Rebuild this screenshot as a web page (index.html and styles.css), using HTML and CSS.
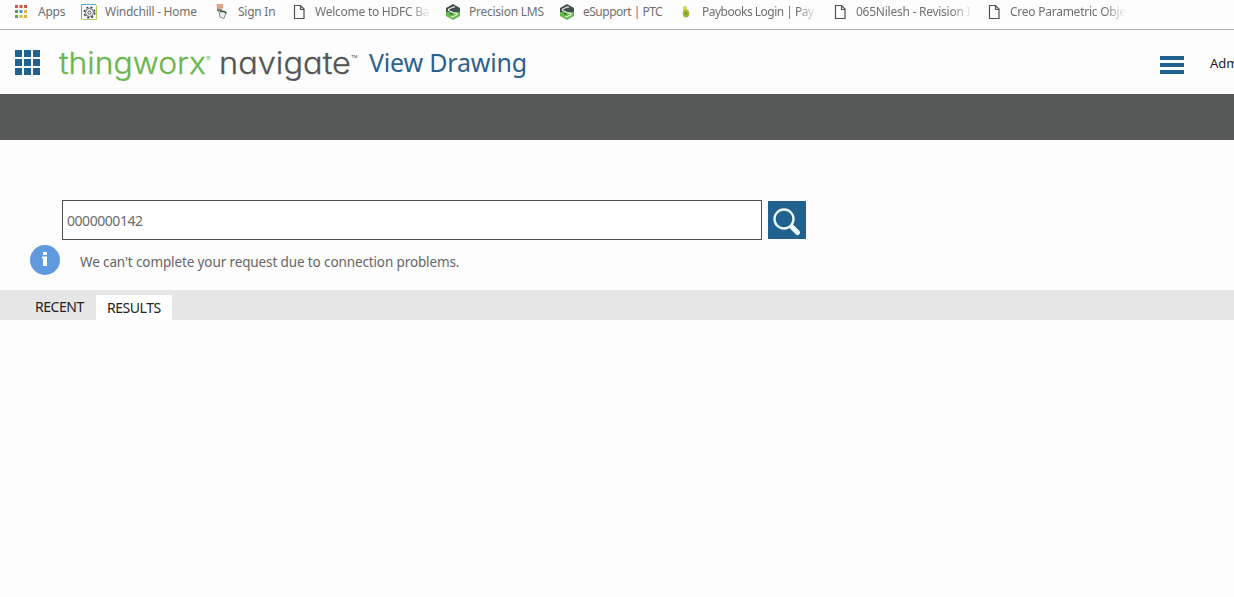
FILE: index.html
```html
<!DOCTYPE html>
<html lang="en">
<head>
    <meta charset="UTF-8">
    <meta name="viewport" content="width=device-width, initial-scale=1.0">
    <title>View Drawing</title>
    <link rel="stylesheet" href="styles.css">
</head>
<body>
    <svg class="symbols" width="0" height="0">
        <symbol id="page" viewBox="0 0 16 16">
            <path d="M3.500 1.500h6l3.500 3.500v9.500h-9.500zM9.500 1.500v4h3.500" fill="#fff" stroke="#505050" stroke-width="1.200"/>
        </symbol>
        <symbol id="ptc" viewBox="0 0 16 16">
            <path d="M1 4l7-4 7 4v4H1z" fill="#45504e"/>
            <path d="M1 8h14v4l-7 4-7-4z" fill="#62bd47"/>
            <path d="M10 3.300L8.500 2.800 3.500 5.300v1.200L8 8.500l4 1.200v1L7.500 13 6 12.500" fill="none" stroke="#f4f8f3" stroke-width="1.100"/>
            <path d="M8 5.500l4 2-4 .8zM4.500 8.500L8 9.500l-2 1.500z" fill="#45504e"/>
        </symbol>
    </svg>
    <nav class="bookmarks">
        <a class="bookmark">
            <svg class="icon" viewBox="0 0 16 16">
                <path d="M2 1h3v3H2zM6.500 1h3v3h-3zM11 1h3v3h-3z" fill="#d0574b"/>
                <path d="M2 6h3v3H2z" fill="#4e9c60"/>
                <path d="M6.500 6h3v3h-3z" fill="#4c8fd8"/>
                <path d="M11 6h3v3h-3zM6.500 11h3v3h-3zM11 11h3v3h-3z" fill="#e3b43c"/>
                <path d="M2 11h3v3H2z" fill="#5aa263"/>
            </svg>
            <span class="label apps">Apps</span>
        </a>
        <a class="bookmark">
            <svg class="icon" viewBox="0 0 16 16">
                <path d="M.5 15V.5H15" fill="none" stroke="#5aa7d8"/>
                <path d="M1 15.500h14.500V1" fill="none" stroke="#b4ce62"/>
                <circle cx="8.500" cy="8.500" r="5.300" fill="none" stroke="#3d4650" stroke-width="1.500" stroke-dasharray="2.200 2"/>
                <circle cx="8.500" cy="8.500" r="4" fill="none" stroke="#3d4650" stroke-width=".8"/>
                <circle cx="8.500" cy="8.500" r="1.600" fill="none" stroke="#3d4650"/>
            </svg>
            <span class="label">Windchill - Home</span>
        </a>
        <a class="bookmark">
            <svg class="icon" viewBox="0 0 16 16">
                <path d="M2.500 0h6.500v4.500l-6 .5z" fill="#e5a184"/>
                <path d="M3 4.500l4 .5 2 1-2 2-4-1z" fill="#7c8478"/>
                <path d="M5 7l1 6 4 1.500 2-6" fill="#eef0ec" stroke="#858b85"/>
                <path d="M6 7.500h4l2.500 1.500" fill="none" stroke="#33604c" stroke-width="1.500"/>
            </svg>
            <span class="label">Sign In</span>
        </a>
        <a class="bookmark">
            <svg class="icon"><use href="#page"/></svg>
            <span class="label fade">Welcome to HDFC Ba</span>
        </a>
        <a class="bookmark">
            <svg class="icon"><use href="#ptc"/></svg>
            <span class="label">Precision LMS</span>
        </a>
        <a class="bookmark">
            <svg class="icon"><use href="#ptc"/></svg>
            <span class="label tight">eSupport | PTC</span>
        </a>
        <a class="bookmark">
            <svg class="icon" viewBox="0 0 16 16">
                <path d="M5 3c2-2 4-1 4 2v2H5z" fill="#d5dc45"/>
                <ellipse cx="8" cy="9.500" rx="3.300" ry="4" fill="#9dbb32"/>
                <circle cx="8" cy="9.500" r="1.200" fill="#6f8d2b"/>
            </svg>
            <span class="label fade tight">Paybooks Login | Pay</span>
        </a>
        <a class="bookmark">
            <svg class="icon"><use href="#page"/></svg>
            <span class="label fade">065Nilesh - Revision I</span>
        </a>
        <a class="bookmark">
            <svg class="icon"><use href="#page"/></svg>
            <span class="label fade">Creo Parametric Obje</span>
        </a>
    </nav>

    <header class="header">
        <svg class="grid-icon" viewBox="0 0 25 25">
            <path d="M0 0h7v7H0zM9 0h7v7H9zM18 0h7v7h-7zM0 9h7v7H0zM9 9h7v7H9zM18 9h7v7h-7zM0 18h7v7H0zM9 18h7v7H9zM18 18h7v7h-7z" fill="#21618f"/>
        </svg>
        <svg class="logo" viewBox="0 0 302 44">
            <text class="thing" x="0" y="27.500" textLength="147" lengthAdjust="spacingAndGlyphs">thingworx</text>
            <text class="reg" x="147" y="16">®</text>
            <text class="nav" x="160" y="27.500" textLength="132" lengthAdjust="spacingAndGlyphs">navigate</text>
            <text class="tm" x="292" y="18">™</text>
        </svg>
        <h1 class="title">View Drawing</h1>
        <svg class="menu" viewBox="0 0 24 18">
            <path d="M0 0h24v4H0zM0 7h24v4H0zM0 14h24v4H0z" fill="#21618f"/>
        </svg>
        <span class="user">Admin</span>
    </header>
    <div class="toolbar"></div>

    <main>
        <form class="search">
            <input class="search-input" type="text" value="0000000142">
            <button class="search-btn" type="button">
                <svg viewBox="0 0 38 38">
                    <path d="M23 25l6.500 6.500" stroke="#f2ffff" stroke-width="5" stroke-linecap="round"/>
                    <circle cx="16" cy="18" r="9.500" fill="#21618f" stroke="#f2ffff" stroke-width="2.300"/>
                </svg>
            </button>
        </form>
        <div class="notice">
            <svg class="info" viewBox="0 0 30 30">
                <circle cx="15" cy="15" r="15" fill="#6199df"/>
                <path d="M13 7h4v3h-4zM12 11.500h5V21h-4v-7.500h-1z" fill="#fff"/>
            </svg>
            <span class="notice-text">We can't complete your request due to connection problems.</span>
        </div>
        <div class="tabs">
            <div class="tab">RECENT</div>
            <div class="tab active">RESULTS</div>
        </div>
    </main>
</body>
</html>
```
FILE: styles.css
```css
* {
    box-sizing: border-box;
}
body {
    margin: 0;
    height: 597px;
    overflow: hidden;
    font-family: "Noto Sans", "Open Sans", sans-serif;
    background-color: #fdfdfd;
}
.symbols {
    display: block;
}
.bookmarks {
    display: grid;
    grid-template-columns: 68px 133px 77px 154px 114px 119px 154px 154px 154px;
    height: 30px;
    padding: 4px 0 0 13px;
    border-bottom: 1px solid #acaeac;
}
.bookmark {
    display: flex;
    align-items: flex-start;
    gap: 8px;
    min-width: 0;
}
.icon {
    flex: none;
    width: 16px;
    height: 16px;
}
.label {
    font-size: 12px;
    line-height: 16px;
    letter-spacing: -0.25px;
    color: #707070;
    white-space: nowrap;
}
.apps {
    margin-left: 1px;
}
.tight {
    letter-spacing: -0.5px;
}
.fade {
    width: 116px;
    -webkit-mask-image: linear-gradient(to right, #000 82%, transparent);
    mask-image: linear-gradient(to right, #000 82%, transparent);
}
.header {
    display: flex;
    align-items: flex-start;
    height: 64px;
    padding: 20px 0 0 15px;
    overflow: hidden;
}
.grid-icon {
    flex: none;
    width: 25px;
    height: 25px;
}
.logo {
    flex: none;
    width: 302px;
    height: 44px;
    margin: -4px 0 0 19px;
    font-family: Inter, sans-serif;
    font-size: 30px;
    font-weight: 300;
    font-feature-settings: "cv11";
}
.thing {
    fill: #69b64d;
    stroke: #69b64d;
    stroke-width: 0.3px;
}
.nav {
    fill: #525554;
    stroke: #525554;
    stroke-width: 0.3px;
}
.reg {
    font-size: 7px;
    fill: #69b64d;
}
.tm {
    font-size: 11px;
    fill: #525554;
}
.title {
    flex: none;
    margin: -6px 0 0 8px;
    font-size: 25px;
    line-height: 36px;
    font-weight: 400;
    letter-spacing: -0.2px;
    color: #2c618f;
}
.menu {
    flex: none;
    width: 24px;
    height: 18px;
    margin: 6px 26px 0 auto;
}
.user {
    width: 24px;
    margin-top: 3px;
    font-size: 13px;
    line-height: 20px;
    color: #222;
    white-space: nowrap;
}
.toolbar {
    height: 46px;
    background-color: #575958;
}
.search {
    display: flex;
    align-items: center;
    gap: 6px;
    padding: 60px 0 0 62px;
}
.search-input {
    width: 700px;
    height: 40px;
    padding: 1px 4px 0;
    border: 1px solid #505055;
    background-color: #fff;
    font-family: inherit;
    font-size: 14px;
    letter-spacing: -0.45px;
    color: #6a6a6a;
}
.search-btn {
    width: 38px;
    height: 38px;
    padding: 0;
    border: 0;
    background-color: #21618f;
}
.search-btn svg {
    display: block;
}
.notice {
    display: flex;
    align-items: center;
    gap: 20px;
    height: 50px;
    padding: 0 0 10px 30px;
}
.info {
    width: 30px;
    height: 30px;
}
.notice-text {
    padding-top: 3px;
    font-size: 13.5px;
    letter-spacing: -0.12px;
    color: #666;
}
.tabs {
    display: flex;
    align-items: flex-end;
    height: 30px;
    padding-left: 24px;
    background-color: #e6e6e6;
}
.tab {
    width: 72px;
    height: 26px;
    padding-left: 11px;
    font-size: 14px;
    line-height: 25px;
    letter-spacing: -0.45px;
    color: #222;
}
.active {
    width: 76px;
    height: 25px;
    background-color: #fff;
}
```
